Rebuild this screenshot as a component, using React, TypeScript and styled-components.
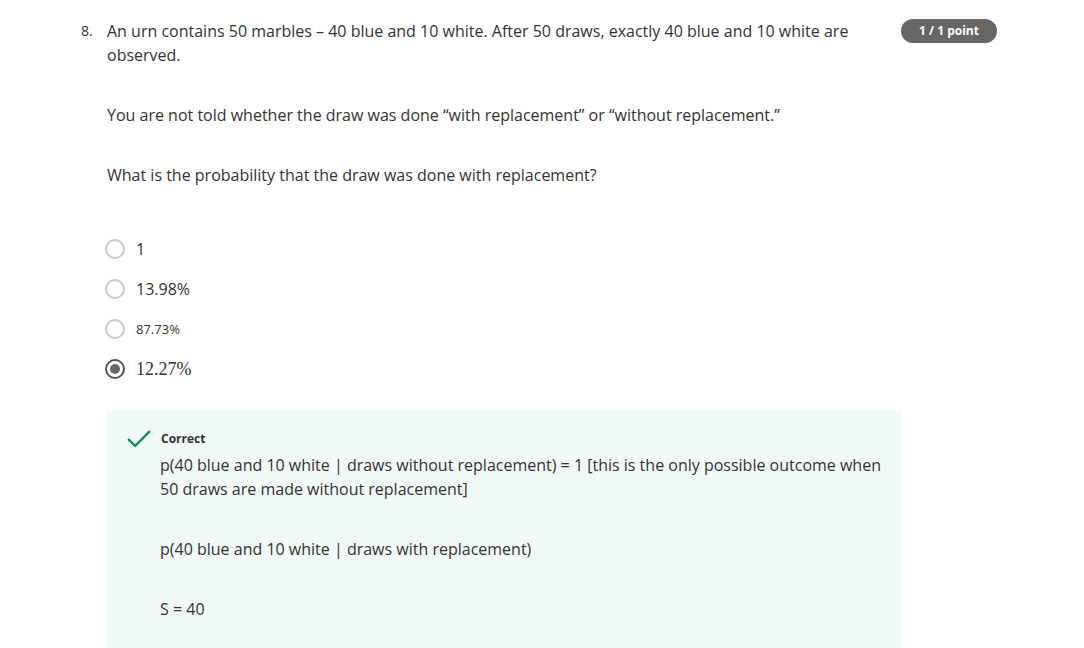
import React from "react";
import styled, { createGlobalStyle } from "styled-components";

const Global = createGlobalStyle`
  html, body { margin: 0; padding: 0; background: #ffffff; }
  body { font-family: "Open Sans", "Noto Sans", sans-serif; color: #333333; }
  p { margin: 0; }
`;

const Page = styled.div`
  padding: 19px 0 0 81px;
`;

const QuestionRow = styled.div`
  display: flex;
  align-items: flex-start;
`;

const Number = styled.div`
  width: 26px;
  flex: none;
  font-size: 14px;
  line-height: 24px;
  color: #333333;
`;

const Content = styled.div`
  width: 794px;
  flex: none;
`;

const Badge = styled.div`
  flex: none;
  width: 96px;
  height: 24px;
  border-radius: 12px;
  background: #666666;
  color: #ffffff;
  font-size: 12px;
  font-weight: 700;
  line-height: 24px;
  text-align: center;
`;

const Para = styled.p`
  font-size: 16px;
  line-height: 24px;
  color: #333333;
  & + & { margin-top: 36px; }
`;

const Options = styled.div`
  margin-top: 42px;
  display: flex;
  flex-direction: column;
`;

const Option = styled.label`
  display: flex;
  align-items: center;
  height: 40px;
  gap: 11px;
  margin-left: -2px;
`;

const Radio = styled.span<{ $checked?: boolean }>`
  box-sizing: border-box;
  width: 20px;
  height: 20px;
  border-radius: 50%;
  flex: none;
  border: ${(p) => (p.$checked ? "2px solid #555555" : "2px solid #cacaca")};
  display: flex;
  align-items: center;
  justify-content: center;
  &::after {
    content: "";
    display: ${(p) => (p.$checked ? "block" : "none")};
    width: 10px;
    height: 10px;
    border-radius: 50%;
    background: #666666;
  }
`;

const Label = styled.span<{ $size?: number; $serif?: boolean }>`
  font-size: ${(p) => p.$size ?? 16}px;
  font-family: ${(p) =>
    p.$serif ? `"Liberation Serif", "DejaVu Serif", serif` : `"Open Sans", sans-serif`};
  color: #333333;
  line-height: 24px;
`;

const Feedback = styled.div`
  margin: 22px 0 0 -1px;
  background: #f1faf7;
  padding: 18px 20px 40px 21px;
  display: flex;
  flex-direction: column;
`;

const FeedbackHead = styled.div`
  display: flex;
  align-items: center;
  height: 20px;
`;

const IconCol = styled.div`
  width: 34px;
  flex: none;
  display: flex;
  align-items: center;
`;

const CorrectText = styled.span`
  font-size: 12px;
  font-weight: 700;
  color: #333333;
  line-height: 20px;
`;

const FeedbackBody = styled.div`
  margin-top: 4px;
  padding-left: 33px;
`;

const Check = () => (
  <svg width="24" height="18" viewBox="0 0 24 18" fill="none">
    <path d="M1.8 9.8 L8.2 15.8 L22.2 1.8" stroke="#138a5a" strokeWidth="2.4" strokeLinecap="round" strokeLinejoin="miter" />
  </svg>
);

export default function App() {
  return (
    <>
      <Global />
      <Page>
        <QuestionRow>
          <Number>8.</Number>
          <Content>
            <Para>
              An urn contains 50 marbles – 40 blue and 10 white. After 50 draws, exactly 40 blue and 10 white are observed.
            </Para>
            <Para>You are not told whether the draw was done “with replacement” or “without replacement.”</Para>
            <Para>What is the probability that the draw was done with replacement?</Para>
            <Options>
              <Option>
                <Radio />
                <Label>1</Label>
              </Option>
              <Option>
                <Radio />
                <Label>13.98%</Label>
              </Option>
              <Option>
                <Radio />
                <Label $size={13}>87.73%</Label>
              </Option>
              <Option>
                <Radio $checked />
                <Label $size={18} $serif>12.27%</Label>
              </Option>
            </Options>
            <Feedback>
              <FeedbackHead>
                <IconCol>
                  <Check />
                </IconCol>
                <CorrectText>Correct</CorrectText>
              </FeedbackHead>
              <FeedbackBody>
                <Para>
                  p(40 blue and 10 white | draws without replacement) = 1 [this is the only possible outcome when 50 draws are made without replacement]
                </Para>
                <Para>p(40 blue and 10 white | draws with replacement)</Para>
                <Para>S = 40</Para>
              </FeedbackBody>
            </Feedback>
          </Content>
          <Badge>1 / 1 point</Badge>
        </QuestionRow>
      </Page>
    </>
  );
}
